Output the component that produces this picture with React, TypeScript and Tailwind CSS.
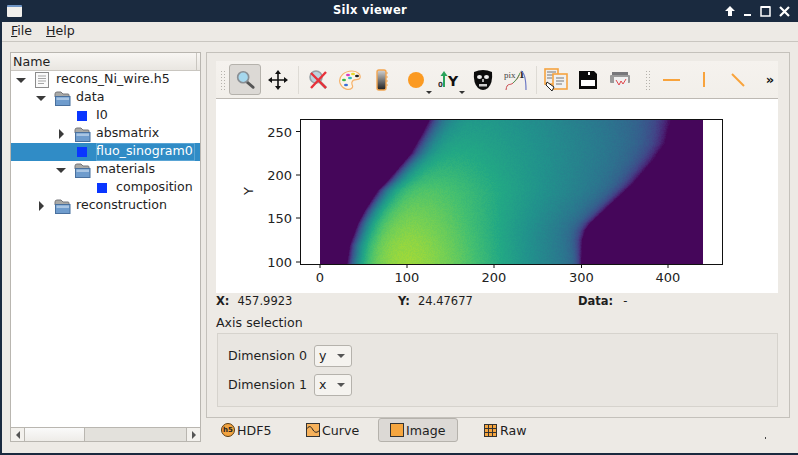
import React, { useEffect, useRef } from "react";

const font = "font-['DejaVu_Sans',sans-serif]";

// viridis stops, 0 to 1 in steps of 0.1
const VIRIDIS = [
  [68, 1, 84],
  [72, 36, 117],
  [65, 68, 135],
  [53, 95, 141],
  [42, 120, 142],
  [33, 145, 140],
  [34, 168, 132],
  [68, 191, 112],
  [122, 209, 81],
  [189, 223, 38],
  [253, 231, 37],
];

function viridis(v: number) {
  const p = Math.max(0, Math.min(0.9999, v)) * 10;
  const i = Math.floor(p);
  const f = p - i;
  return VIRIDIS[i].map((c, k) => c + (VIRIDIS[i + 1][k] - c) * f);
}

function interp(points: number[][], y: number) {
  for (let i = 0; i < points.length - 1; i++) {
    const [y0, x0] = points[i];
    const [y1, x1] = points[i + 1];
    if (y <= y1) return x0 + ((x1 - x0) * (y - y0)) / (y1 - y0);
  }
  return points[points.length - 1][1];
}

// screen y -> screen x of the sample's two edges
const LEFT_EDGE = [
  [120, 428],
  [130, 423],
  [153, 410],
  [180, 387],
  [190, 377],
  [210, 364],
  [223, 357],
  [245, 349],
  [264, 346],
];
const RIGHT_EDGE = [
  [120, 671],
  [143, 665],
  [160, 653],
  [183, 633],
  [207, 607],
  [223, 590],
  [230, 585],
  [240, 582],
  [264, 581],
];

const HeatMap = () => {
  const ref = useRef<HTMLCanvasElement>(null);

  useEffect(() => {
    const ctx = ref.current?.getContext("2d");
    if (!ctx) return;
    const img = ctx.createImageData(383, 144);
    for (let py = 0; py < 144; py++) {
      for (let px = 0; px < 383; px++) {
        const x = px + 320;
        const y = py + 120;
        const l = interp(LEFT_EDGE, y);
        const r = interp(RIGHT_EDGE, y);
        const u = (y - 120) / 144;
        let v = 0;
        if (x > l && x < r) {
          const s = (x - l) / (r - l);
          const base = 0.66 * (0.85 + 0.15 * Math.min(1, u * 2)) * (1 - 0.5 * Math.pow(s, 1.5));
          const dx = (x - 415) / 100;
          const dy = (y - 265) / 85;
          const bump = 0.24 * Math.exp(-dx * dx - dy * dy);
          const rise = 1 - Math.exp(-(x - l) / 13);
          const fall = 1 - Math.exp(-(r - x) / (4 + 10 * (1 - u)));
          v = (base + bump) * rise * fall;
          const n = Math.sin(px * 12.9898 + py * 78.233) * 43758.5453;
          v += ((n - Math.floor(n)) - 0.5) * 0.025;
        }
        const [cr, cg, cb] = v <= 0.012 ? [69, 6, 90] : viridis(v);
        const o = (py * 383 + px) * 4;
        img.data[o] = cr;
        img.data[o + 1] = cg;
        img.data[o + 2] = cb;
        img.data[o + 3] = 255;
      }
    }
    ctx.putImageData(img, 0, 0);
  }, []);

  return <canvas ref={ref} width={383} height={144} className="absolute left-[104px] top-[21px] w-[383px] h-[144px]" />;
};

const Plot = () => {
  const xTicks = [
    [104, "0"],
    [191, "100"],
    [278, "200"],
    [365.5, "300"],
    [452, "400"],
  ] as [number, string][];
  const yTicks = [
    [32.5, "250"],
    [76, "200"],
    [119, "150"],
    [163, "100"],
  ] as [number, string][];
  return (
    <div className="relative h-[194px] bg-white">
      <svg width="562" height="194" className="absolute inset-0" fontFamily="DejaVu Sans, sans-serif" fontSize="13" fill="#222">
        <rect x="84.5" y="20.5" width="422" height="145" fill="none" stroke="#111" />
        {xTicks.map(([x, t]) => (
          <g key={t}>
            <line x1={x} x2={x} y1="165" y2="169" stroke="#111" />
            <text x={x} y="183" textAnchor="middle">{t}</text>
          </g>
        ))}
        {yTicks.map(([y, t]) => (
          <g key={t}>
            <line x1="80" x2="84" y1={y} y2={y} stroke="#111" />
            <text x="76" y={y + 5} textAnchor="end">{t}</text>
          </g>
        ))}
        <text x="0" y="0" textAnchor="middle" transform="translate(37 92) rotate(-90)">Y</text>
      </svg>
      <HeatMap />
    </div>
  );
};

const FolderIcon = () => (
  <svg width="17" height="15" viewBox="0 0 17 15">
    <path d="M1 3 Q1 1 3 1 H7 L9 3 H14 Q15 3 15 4 V6 H1Z" fill="#a9a9a6" stroke="#77777a" />
    <rect x="1.5" y="5.5" width="14.5" height="9" fill="#6f9ccd" stroke="#49709e" />
    <rect x="2.5" y="6.5" width="12.5" height="2.5" fill="#a9c5e3" />
  </svg>
);

const FileIcon = () => (
  <svg width="14" height="16" viewBox="0 0 14 16">
    <rect x="0.5" y="0.5" width="13" height="15" fill="#fafafa" stroke="#8b8b8b" />
    <path d="M3 4H11M3 6.5H11M3 9H11M3 11.5H9" stroke="#a5a5a5" />
  </svg>
);

const Square = () => <div className="w-[10px] h-[10px] bg-[#0a36ff]" />;

type RowProps = {
  indent: string;
  arrow?: "down" | "right";
  icon: React.ReactNode;
  label: string;
  selected?: boolean;
};

const TreeRow = ({ indent, arrow, icon, label, selected }: RowProps) => (
  <div className={`flex items-center h-[18px] ${indent} ${selected ? "bg-[#308cc6] text-white" : ""}`}>
    <div className="w-[14px] flex justify-center">
      {arrow === "down" && <div className="w-0 h-0 border-x-[5px] border-x-transparent border-t-[5px] border-t-[#3a3a3a]" />}
      {arrow === "right" && <div className="w-0 h-0 border-y-[5px] border-y-transparent border-l-[5px] border-l-[#3a3a3a]" />}
    </div>
    <div className="w-[22px] ml-[3px] flex justify-center">{icon}</div>
    <span className={`ml-[3px] h-[18px] leading-[16px] whitespace-nowrap ${selected ? "outline outline-1 outline-[#5aa5d5] -outline-offset-1 pr-[2px]" : ""}`}>{label}</span>
  </div>
);

const Btn = ({ className = "w-[32px]", children }: { className?: string; children: React.ReactNode }) => (
  <div className={`h-[32px] flex items-center justify-center shrink-0 ${className}`}>{children}</div>
);

const Sep = () => (
  <div className="w-[8px] h-[28px] flex justify-center shrink-0">
    <div className="w-px bg-[#dedbd5]" />
  </div>
);

const Handle = ({ className }: { className: string }) => (
  <div className={`w-[5px] h-[20px] shrink-0 bg-[radial-gradient(#b5b2ac_0.7px,transparent_0.8px)] bg-[length:3px_3px] ${className}`} />
);

const DropMark = () => (
  <div className="absolute right-[1px] bottom-[2px] w-0 h-0 border-x-[3px] border-x-transparent border-t-[3px] border-t-[#333]" />
);

const Combo = ({ value }: { value: string }) => (
  <div className="w-[38px] h-[22px] border border-[#b5b2ac] rounded-[3px] bg-[#f5f3ef] flex items-center pl-[4px]">
    <span className="flex-1 text-[#222]">{value}</span>
    <div className="w-0 h-0 mr-[6px] border-x-[4px] border-x-transparent border-t-[4px] border-t-[#555]" />
  </div>
);

export default function App() {
  return (
    <div className={`w-[798px] h-[455px] flex flex-col bg-[#edeae5] border-l-2 border-b-2 border-[#1a2a3f] overflow-hidden text-[12.6px] text-[#1e1e1e] ${font}`}>
      {/* title bar */}
      <div className="h-[22px] shrink-0 bg-[#1a2a3f] flex items-center relative text-white">
        <div className="ml-[5px] w-[15px] h-[12px] bg-[#f2f0ec] border-t-2 border-[#6f95c5] rounded-[1px]" />
        <span className="absolute left-0 right-[60px] text-center font-bold text-[11.5px] tracking-[0.3px]">Silx viewer</span>
        <div className="ml-auto flex items-center gap-[4px] pr-[7px] relative">
          <svg width="14" height="14" viewBox="0 0 14 14"><path d="M7 2 L12 7 H9 V12 H5 V7 H2Z" fill="#fff" /></svg>
          <svg width="14" height="14" viewBox="0 0 14 14"><rect x="3" y="10" width="7" height="2" fill="#fff" /></svg>
          <svg width="14" height="14" viewBox="0 0 14 14"><rect x="2" y="3" width="9" height="9" fill="none" stroke="#fff" strokeWidth="1.5" /><rect x="2" y="2" width="9" height="2" fill="#fff" /></svg>
          <svg width="14" height="14" viewBox="0 0 14 14"><path d="M3 3 L12 12 M12 3 L3 12" stroke="#fff" strokeWidth="2.2" /></svg>
        </div>
      </div>

      {/* menu bar */}
      <div className="h-[20px] shrink-0 flex items-center border-b border-[#c9c6c0] pl-[9px] gap-[14px]">
        <span><span className="underline">F</span>ile</span>
        <span><span className="underline">H</span>elp</span>
      </div>

      <div className="flex-1 flex pt-[10px] pl-[8px] pr-[8px] min-h-0">
        {/* tree panel */}
        <div className="w-[191px] h-[390px] shrink-0 border border-[#b9b6b0] bg-white flex flex-col">
          <div className="h-[18px] shrink-0 flex bg-gradient-to-b from-[#f8f6f3] to-[#e9e6e1] border-b border-[#c9c6c0]">
            <div className="w-[186px] pl-[2px] border-r border-[#c9c6c0] leading-[18px]">Name</div>
          </div>
          <div className="flex-1">
            <TreeRow indent="pl-[3px]" arrow="down" icon={<FileIcon />} label="recons_Ni_wire.h5" />
            <TreeRow indent="pl-[23px]" arrow="down" icon={<FolderIcon />} label="data" />
            <TreeRow indent="pl-[43px]" icon={<Square />} label="I0" />
            <TreeRow indent="pl-[43px]" arrow="right" icon={<FolderIcon />} label="absmatrix" />
            <TreeRow indent="pl-[43px]" icon={<Square />} label="fluo_sinogram0" selected />
            <TreeRow indent="pl-[43px]" arrow="down" icon={<FolderIcon />} label="materials" />
            <TreeRow indent="pl-[63px]" icon={<Square />} label="composition" />
            <TreeRow indent="pl-[23px]" arrow="right" icon={<FolderIcon />} label="reconstruction" />
          </div>
          <div className="h-[14px] shrink-0 flex border-t border-[#b9b6b0] bg-[#e3e1dc]">
            <div className="w-[14px] border-r border-[#b9b6b0] bg-[#f3f1ed] flex items-center justify-center">
              <div className="w-0 h-0 border-y-[4px] border-y-transparent border-r-[4px] border-r-[#555]" />
            </div>
            <div className="w-[60px] border-r border-[#b9b6b0] bg-gradient-to-b from-[#fafafa] to-[#eeece8]" />
            <div className="flex-1" />
            <div className="w-[14px] border-l border-[#b9b6b0] bg-[#f3f1ed] flex items-center justify-center">
              <div className="w-0 h-0 border-y-[4px] border-y-transparent border-l-[4px] border-l-[#555]" />
            </div>
          </div>
        </div>

        {/* splitter */}
        <div className="w-[5px] shrink-0 flex items-center justify-center">
          <div className="w-[2px] h-[12px] bg-[radial-gradient(#b5b2ac_0.6px,transparent_0.7px)] bg-[length:2px_2px]" />
        </div>

        <div className="flex-1 flex flex-col min-w-0">
          {/* view frame */}
          <div className="h-[366px] shrink-0 border border-[#c4c1bb] pt-[8px] pl-[9px] pr-[11px] flex flex-col">
            <div className="h-[38px] shrink-0 flex items-center bg-gradient-to-b from-[#f5f2ee] to-[#f2efea] border-b border-[#bdb9b3] pl-[4px]">
              <Handle className="mr-[4px]" />
              <div className="w-[32px] h-[31px] shrink-0 rounded-[3px] border border-[#b5b2ac] bg-[#dcd9d5] flex items-center justify-center">
                <svg width="22" height="22" viewBox="0 0 24 24">
                  <path d="M14 14 L21 20" stroke="#555" strokeWidth="3" strokeLinecap="round" />
                  <circle cx="10" cy="9" r="6" fill="#a6d8ee" stroke="#8a8f94" strokeWidth="1.8" />
                </svg>
              </div>
              <Btn className="w-[33px]">
                <svg width="20" height="20" viewBox="0 0 20 20">
                  <path d="M10 2V18M2 10H18" stroke="#111" strokeWidth="1.6" />
                  <path d="M10 0 L13 4H7Z M10 20 L13 16H7Z M0 10 L4 7V13Z M20 10 L16 7V13Z" fill="#111" />
                </svg>
              </Btn>
              <Sep />
              <Btn>
                <svg width="22" height="22" viewBox="0 0 22 22">
                  <circle cx="9" cy="8" r="6" fill="#bcd3de" stroke="#98a0a5" strokeWidth="1.6" />
                  <path d="M13 13 L19 19" stroke="#777" strokeWidth="2.5" />
                  <path d="M4 19 L19 3 M4 4 L19 19" stroke="#e8313a" strokeWidth="2.4" />
                </svg>
              </Btn>
              <Btn>
                <svg width="24" height="22" viewBox="0 0 24 22">
                  <path d="M2 14 C0 7 7 2 14 2 C20 2 23 6 22 9 C21 12 15 9 14 13 C13 16 16 17 14 19 C11 22 4 20 2 14Z" fill="#faf5ea" stroke="#f6b26b" strokeWidth="1.2" />
                  <ellipse cx="6" cy="11" rx="2" ry="1.2" fill="#3cb54a" />
                  <ellipse cx="10" cy="6" rx="2" ry="1.2" fill="#d73ac8" />
                  <ellipse cx="15" cy="5" rx="2" ry="1.2" fill="#e6d92a" />
                  <ellipse cx="19" cy="7" rx="2" ry="1.2" fill="#222" />
                  <ellipse cx="8" cy="16" rx="2" ry="1.2" fill="#3a6fd8" />
                  <ellipse cx="12" cy="9" rx="2" ry="1.2" fill="#2fbdbd" />
                </svg>
              </Btn>
              <Btn>
                <svg width="14" height="24" viewBox="0 0 14 24">
                  <defs>
                    <linearGradient id="cb" x1="0" y1="0" x2="0" y2="1">
                      <stop offset="0" stopColor="#d5d5d5" />
                      <stop offset="1" stopColor="#1c1c1c" />
                    </linearGradient>
                  </defs>
                  <rect x="2" y="2" width="9" height="20" rx="2" fill="url(#cb)" stroke="#f2a550" strokeWidth="1.4" />
                  <path d="M11 5H13M11 9H13M11 13H13M11 17H13" stroke="#f2a550" />
                </svg>
              </Btn>
              <Btn className="w-[35px] relative">
                <div className="w-[16px] h-[16px] rounded-full bg-[#fb9a22]" />
                <DropMark />
              </Btn>
              <Btn className="w-[33px] relative">
                <svg width="24" height="20" viewBox="0 0 24 20">
                  <path d="M6 17V5" stroke="#2aa35a" strokeWidth="2" />
                  <path d="M6 1 L9.5 6H2.5Z" fill="#2aa35a" />
                  <text x="0" y="17" fontSize="7" fontWeight="bold" fill="#333">0</text>
                  <text x="10" y="16" fontSize="14" fontWeight="bold" fill="#111">Y</text>
                </svg>
                <DropMark />
              </Btn>
              <Btn className="w-[34px]">
                <svg width="22" height="24" viewBox="0 0 22 24">
                  <path d="M2 4 Q11 0 20 4 Q21 15 16 20 Q11 24 6 20 Q1 15 2 4Z" fill="#0c0c0c" />
                  <ellipse cx="7.5" cy="9" rx="2.5" ry="2" fill="#eee" />
                  <ellipse cx="14.5" cy="9" rx="2.5" ry="2" fill="#eee" />
                  <rect x="10" y="11" width="2" height="3" fill="#aaa" />
                  <rect x="7" y="16" width="8" height="2.5" fill="#ccc" />
                </svg>
              </Btn>
              <Btn>
                <svg width="24" height="24" viewBox="0 0 24 24">
                  <text x="0" y="10" fontSize="9" fontFamily="Liberation Serif, serif" fill="#444">pix</text>
                  <text x="15" y="10" fontSize="11" fontWeight="bold" fontFamily="Liberation Serif, serif" fill="#222">1</text>
                  <path d="M2 22 C3 14 6 18 9 15 C12 12 13 12 15 7" fill="none" stroke="#c9474b" strokeWidth="1" />
                  <path d="M9 15 C12 12 14 10 16 5" fill="none" stroke="#4f9a5a" strokeWidth="1" />
                  <path d="M17 3 C21 5 22 14 22 22" fill="none" stroke="#6c78c4" strokeWidth="1.2" />
                </svg>
              </Btn>
              <Sep />
              <Btn>
                <svg width="24" height="24" viewBox="0 0 24 24">
                  <rect x="1" y="1" width="13" height="15" fill="#eee" stroke="#f5a340" strokeWidth="1.6" />
                  <path d="M3 4H12M3 7H12M3 10H8" stroke="#777" />
                  <rect x="9" y="6" width="14" height="15" fill="#f0f0f0" stroke="#f5a340" strokeWidth="1.6" />
                  <path d="M12 10H20M12 13H20M12 16H18" stroke="#777" />
                  <path d="M3 14 L10 19 L8 23 L2 17Z" fill="#fff" stroke="#222" />
                </svg>
              </Btn>
              <Btn>
                <svg width="18" height="18" viewBox="0 0 18 18">
                  <path d="M0 0H15L18 3V18H0Z" fill="#0a0a0a" />
                  <rect x="9" y="1" width="2" height="3" fill="#fff" />
                  <rect x="2" y="9" width="14" height="6" fill="#fff" />
                </svg>
              </Btn>
              <Btn>
                <svg width="22" height="18" viewBox="0 0 22 18">
                  <rect x="3" y="1" width="16" height="5" fill="#77777a" />
                  <rect x="1" y="4" width="20" height="8" rx="1" fill="#9a9a9a" />
                  <rect x="5" y="6" width="14" height="11" fill="#f0f0f0" />
                  <path d="M7 9 L10 14 L12 10 L14 13 L17 8" fill="none" stroke="#e0474c" />
                </svg>
              </Btn>
              <Handle className="ml-[9px] mr-[5px]" />
              <Btn>
                <div className="w-[17px] h-[2px] bg-[#f8a33c]" />
              </Btn>
              <Btn className="w-[34px]">
                <div className="w-[2px] h-[15px] bg-[#f8a33c]" />
              </Btn>
              <Btn className="w-[33px]">
                <svg width="16" height="16" viewBox="0 0 16 16"><path d="M2 2 L14 14" stroke="#f8a33c" strokeWidth="2" /></svg>
              </Btn>
              <Btn className="w-[32px]">
                <span className="font-bold text-[13px] leading-none text-[#111]">»</span>
              </Btn>
            </div>

            <Plot />

            <div className="h-[18px] shrink-0 flex items-center text-[11.5px]">
              <span className="w-[182px] whitespace-nowrap"><b className="mr-[8px]">X:</b>457.9923</span>
              <span className="w-[180px] whitespace-nowrap"><b className="mr-[8px]">Y:</b>24.47677</span>
              <span className="whitespace-nowrap"><b className="mr-[10px]">Data:</b>-</span>
            </div>
            <div className="h-[22px] shrink-0 flex items-center pt-[2px]">Axis selection</div>
            <div className="h-[74px] shrink-0 border border-[#d6d3cd] bg-[#e9e6e1] ml-px pl-[10px] pt-[11px] flex flex-col gap-[7px]">
              <div className="flex items-center gap-[7px]">
                <span>Dimension 0</span>
                <Combo value="y" />
              </div>
              <div className="flex items-center gap-[7px]">
                <span>Dimension 1</span>
                <Combo value="x" />
              </div>
            </div>
          </div>

          {/* view tabs */}
          <div className="flex h-[24px] pl-[10px] items-center">
            <div className="w-[82px] h-full flex items-center pl-[5px] gap-[2px]">
              <div className="w-[14px] h-[14px] rounded-full bg-[#f2a33f] border border-[#5a3c14] flex items-center justify-center text-[7px] font-bold text-[#222] leading-none">h5</div>
              <span className="pt-[2px]">HDF5</span>
            </div>
            <div className="w-[80px] h-full flex items-center pl-[8px] gap-[2px]">
              <svg width="14" height="14" viewBox="0 0 14 14">
                <rect x="0.5" y="0.5" width="13" height="13" fill="#f6b15a" stroke="#333" />
                <path d="M0 7 C3 2 5 3 7 7 C9 10 11 10 14 7" fill="none" stroke="#222" />
              </svg>
              <span className="pt-[2px]">Curve</span>
            </div>
            <div className="w-[80px] h-full flex items-center pl-[11px] gap-[2px] rounded-[3px] border border-[#b5b2ac] bg-[#dcd9d5]">
              <div className="w-[14px] h-[14px] bg-[#f6a63f] border border-[#333]" />
              <span className="pt-[2px]">Image</span>
            </div>
            <div className="w-[80px] h-full flex items-center pl-[26px] gap-[3px]">
              <svg width="13" height="13" viewBox="0 0 13 13">
                <rect x="0.5" y="0.5" width="12" height="12" fill="#f6a63f" stroke="#333" />
                <path d="M4.5 0V13M8.5 0V13M0 4.5H13M0 8.5H13" stroke="#333" />
              </svg>
              <span className="pt-[2px]">Raw</span>
            </div>
            <div className="ml-auto mr-[24px] mt-[16px] w-px h-[2px] bg-[#444]" />
          </div>
        </div>
      </div>
    </div>
  );
}
